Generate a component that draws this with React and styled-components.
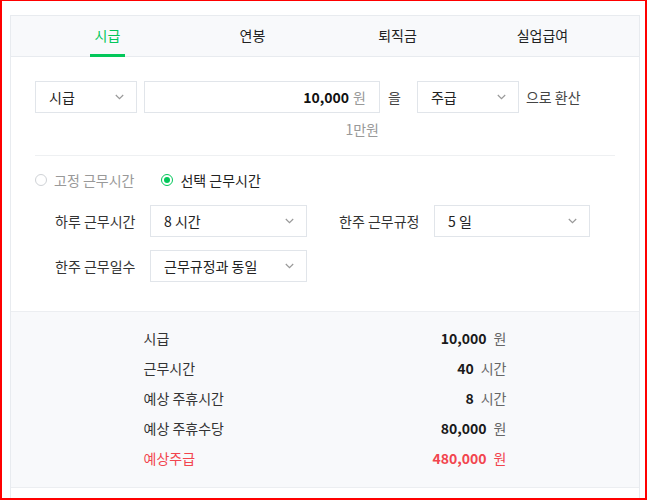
import React from 'react';
import styled, { createGlobalStyle } from 'styled-components';

const Global = createGlobalStyle`
  html, body { margin: 0; padding: 0; background: #fff; }
  body { font-family: "Noto Sans CJK KR", "Noto Sans", sans-serif; color: #222; }
`;

const Frame = styled.div`
  box-sizing: border-box;
  height: 500px;
  border: 2px solid #ff0000;
  border-top-width: 1px;
  padding: 14px 6px 0 8px;
  overflow: hidden;
`;

const Card = styled.div`
  width: 630px;
  box-sizing: border-box;
  border: 1px solid #e8ebef;
  background: #fff;
`;

const TabBar = styled.nav`
  display: flex;
  height: 40px;
  padding: 0 24px;
  background: #f8f9fb;
  border-bottom: 1px solid #e8ebef;
`;

const Tab = styled.div`
  flex: 1;
  display: flex;
  justify-content: center;
`;

const TabLabel = styled.span`
  display: flex;
  align-items: center;
  box-sizing: border-box;
  height: 41px;
  margin-bottom: -1px;
  padding: 0 5px;
  font-size: 14px;
  color: ${p => (p.$active ? '#03c75a' : '#222')};
  border-bottom: 3px solid ${p => (p.$active ? '#03c75a' : 'transparent')};
`;

const Content = styled.div`
  padding: 24px 24px 29px;
`;

const ConvertRow = styled.div`
  display: flex;
  align-items: flex-start;
`;

const SelectBox = styled.div`
  box-sizing: border-box;
  width: ${p => p.$w}px;
  height: 32px;
  border: 1px solid #e1e5ea;
  background: #fff;
  display: flex;
  align-items: center;
  justify-content: space-between;
  padding: 0 12px 0 13px;
  font-size: 14px;
  color: #222;
`;

const AmountCol = styled.div`
  display: flex;
  flex-direction: column;
  width: 236px;
  margin-left: 7px;
`;

const AmountBox = styled.div`
  box-sizing: border-box;
  height: 32px;
  border: 1px solid #e1e5ea;
  display: flex;
  align-items: center;
  justify-content: flex-end;
  padding-right: 13px;
`;

const AmountValue = styled.span`
  font-size: 14px;
  font-weight: 700;
  color: #111;
`;

const AmountUnit = styled.span`
  margin-left: 4px;
  font-size: 14px;
  color: #999;
`;

const Hint = styled.div`
  margin-top: 6px;
  padding-right: 1px;
  text-align: right;
  font-size: 14px;
  line-height: 20px;
  color: #999;
`;

const Particle = styled.span`
  line-height: 32px;
  font-size: 14px;
  color: #444;
  margin: 0 ${p => p.$mr || 0}px 0 ${p => p.$ml || 0}px;
`;

const Divider = styled.hr`
  border: 0;
  border-top: 1px solid #eef0f2;
  margin: 16px 0 14px;
`;

const RadioRow = styled.div`
  display: flex;
  align-items: center;
  gap: 27px;
  height: 20px;
`;

const RadioItem = styled.label`
  display: flex;
  align-items: center;
  gap: 7px;
  font-size: 14px;
  color: ${p => (p.$checked ? '#222' : '#999')};
`;

const RadioDot = styled.span`
  box-sizing: border-box;
  width: 12px;
  height: 12px;
  border-radius: 50%;
  border: ${p => (p.$checked ? '1.5px solid #03c75a' : '1px solid #cfd2d6')};
  display: flex;
  align-items: center;
  justify-content: center;
  &::after {
    content: '';
    display: ${p => (p.$checked ? 'block' : 'none')};
    width: 6px;
    height: 6px;
    border-radius: 50%;
    background: #03c75a;
  }
`;

const Settings = styled.div`
  margin-top: 15px;
  padding-left: 20px;
  display: flex;
  flex-direction: column;
  gap: 13px;
`;

const SettingRow = styled.div`
  display: flex;
  gap: 32px;
`;

const Field = styled.div`
  display: flex;
  align-items: center;
`;

const FieldLabel = styled.span`
  width: 95px;
  font-size: 14px;
  color: #333;
`;

const Results = styled.div`
  background: #f8f9fb;
  border-top: 1px solid #eceef1;
  border-bottom: 1px solid #eceef1;
  padding: 11px 0 14px;
`;

const ResultList = styled.div`
  width: 363px;
  margin: 0 auto;
`;

const ResultRow = styled.div`
  display: flex;
  align-items: center;
  justify-content: space-between;
  height: 30px;
  font-size: 14px;
  color: ${p => (p.$total ? '#f2454e' : '#333')};
`;

const ResultValue = styled.span`
  display: flex;
  align-items: baseline;
`;

const Num = styled.span`
  font-size: 14px;
  font-weight: 700;
  color: ${p => (p.$total ? '#f2454e' : '#1a1a1a')};
`;

const Unit = styled.span`
  margin-left: 7px;
  font-size: 14px;
  color: ${p => (p.$total ? '#f2454e' : '#666')};
`;

const Footer = styled.div`
  height: 40px;
  background: #fff;
`;

const Chevron = () => (
  <svg width="9" height="6" viewBox="0 0 9 6" fill="none">
    <path d="M0.8 1 L4.5 4.6 L8.2 1" stroke="#999" strokeWidth="1.2" />
  </svg>
);

const Select = ({ w, children }) => (
  <SelectBox $w={w}>
    <span>{children}</span>
    <Chevron />
  </SelectBox>
);

const tabs = ['시급', '연봉', '퇴직금', '실업급여'];

const results = [
  { label: '시급', value: '10,000', unit: '원' },
  { label: '근무시간', value: '40', unit: '시간' },
  { label: '예상 주휴시간', value: '8', unit: '시간' },
  { label: '예상 주휴수당', value: '80,000', unit: '원' },
  { label: '예상주급', value: '480,000', unit: '원', total: true },
];

export default function App() {
  return (
    <>
      <Global />
      <Frame>
        <Card>
          <TabBar>
            {tabs.map((t, i) => (
              <Tab key={t}>
                <TabLabel $active={i === 0}>{t}</TabLabel>
              </Tab>
            ))}
          </TabBar>
          <Content>
            <ConvertRow>
              <Select w={102}>시급</Select>
              <AmountCol>
                <AmountBox>
                  <AmountValue>10,000</AmountValue>
                  <AmountUnit>원</AmountUnit>
                </AmountBox>
                <Hint>1만원</Hint>
              </AmountCol>
              <Particle $ml={8} $mr={16}>을</Particle>
              <Select w={102}>주급</Select>
              <Particle $ml={7}>으로 환산</Particle>
            </ConvertRow>
            <Divider />
            <RadioRow>
              <RadioItem>
                <RadioDot />
                고정 근무시간
              </RadioItem>
              <RadioItem $checked>
                <RadioDot $checked />
                선택 근무시간
              </RadioItem>
            </RadioRow>
            <Settings>
              <SettingRow>
                <Field>
                  <FieldLabel>하루 근무시간</FieldLabel>
                  <Select w={157}>8 시간</Select>
                </Field>
                <Field>
                  <FieldLabel>한주 근무규정</FieldLabel>
                  <Select w={156}>5 일</Select>
                </Field>
              </SettingRow>
              <SettingRow>
                <Field>
                  <FieldLabel>한주 근무일수</FieldLabel>
                  <Select w={157}>근무규정과 동일</Select>
                </Field>
              </SettingRow>
            </Settings>
          </Content>
          <Results>
            <ResultList>
              {results.map(r => (
                <ResultRow key={r.label} $total={r.total}>
                  <span>{r.label}</span>
                  <ResultValue>
                    <Num $total={r.total}>{r.value}</Num>
                    <Unit $total={r.total}>{r.unit}</Unit>
                  </ResultValue>
                </ResultRow>
              ))}
            </ResultList>
          </Results>
          <Footer />
        </Card>
      </Frame>
    </>
  );
}
